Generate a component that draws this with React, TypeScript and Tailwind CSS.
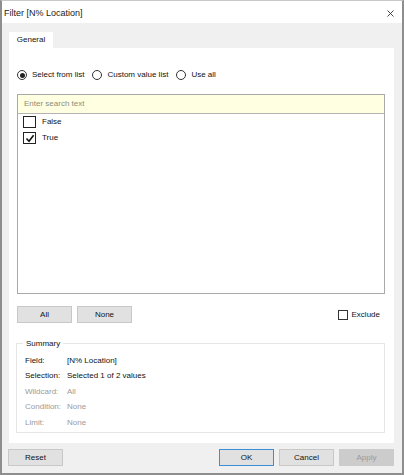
import React, { useState } from 'react';

const font = { fontFamily: '"Liberation Sans", Arial, sans-serif' };

function Radio({ checked }: { checked?: boolean }) {
  return (
    <span className="flex h-[10px] w-[10px] shrink-0 items-center justify-center rounded-full border border-[#333333] bg-white">
      {checked && <span className="h-[5px] w-[5px] rounded-full bg-[#222222]" />}
    </span>
  );
}

function Check({ checked, small }: { checked?: boolean; small?: boolean }) {
  return (
    <span
      className={
        small
          ? 'flex h-[10px] w-[10px] shrink-0 items-center justify-center border border-[#333333] bg-white'
          : 'flex h-[12px] w-[13px] shrink-0 items-center justify-center border border-[#222222] bg-white'
      }
    >
      {checked && (
        <svg width="10" height="9" viewBox="0 0 10 9">
          <path d="M1.5 4.5 L4 7.2 L8.6 1.2" fill="none" stroke="#111" strokeWidth="1.6" />
        </svg>
      )}
    </span>
  );
}

function Btn({ label, variant }: { label: string; variant?: 'primary' | 'disabled' }) {
  const base = 'flex h-[17px] items-center justify-center border text-[8px]';
  const cls =
    variant === 'primary'
      ? 'border-[#3c8fd6] bg-[#e1e1e1] text-[#111]'
      : variant === 'disabled'
      ? 'border-[#cccccc] bg-[#cccccc] text-[#9a9a9a]'
      : 'border-[#c8c8c8] bg-[#e1e1e1] text-[#111]';
  return <div className={`${base} ${cls} w-[55px]`}>{label}</div>;
}

export default function App() {
  const [values] = useState([
    { name: 'False', on: false },
    { name: 'True', on: true },
  ]);

  const summary = [
    { k: 'Field:', v: '[N% Location]', dim: false },
    { k: 'Selection:', v: 'Selected 1 of 2 values', dim: false },
    { k: 'Wildcard:', v: 'All', dim: true },
    { k: 'Condition:', v: 'None', dim: true },
    { k: 'Limit:', v: 'None', dim: true },
  ];

  return (
    <div
      style={font}
      className="flex h-[475px] w-[404px] flex-col border-x-2 border-b-2 border-t border-x-[#8e8e8e] border-b-[#8e8e8e] border-t-[#c8c8c8] bg-[#f0f0f0] text-[#111]"
    >
      {/* title bar */}
      <div className="flex h-[22px] items-center justify-between bg-white pl-[2px] pr-[8px] pt-[3px]">
        <span className="text-[9px] text-[#1a1a1a]">Filter [N% Location]</span>
        <svg width="7" height="7" viewBox="0 0 7 7">
          <path d="M0.5 0.5 L6.5 6.5 M6.5 0.5 L0.5 6.5" stroke="#333" strokeWidth="0.9" />
        </svg>
      </div>

      <div className="flex flex-col px-[7px] pt-[9px]">
        {/* tab */}
        <div className="flex h-[16px] w-[44px] items-center justify-center bg-white text-[8px]">General</div>

        {/* panel */}
        <div className="flex h-[395px] w-[385px] flex-col bg-white">
          <div className="flex items-center gap-[5px] pl-[8px] pt-[21px] text-[8px]">
            <Radio checked />
            <span className="mr-[3px]">Select from list</span>
            <Radio />
            <span className="mr-[3px]">Custom value list</span>
            <Radio />
            <span>Use all</span>
          </div>

          {/* list box */}
          <div className="ml-[8px] mt-[13px] flex h-[200px] w-[368px] flex-col border border-[#a9a9a9]">
            <div className="flex h-[19px] items-center border-b border-[#b4b4b4] bg-[#ffffe1] pl-[6px] text-[8px] text-[#8c8c7c]">
              Enter search text
            </div>
            {values.map((it) => (
              <div key={it.name} className="flex h-[16px] items-center gap-[6px] pl-[5px] text-[8px]">
                <Check checked={it.on} />
                <span>{it.name}</span>
              </div>
            ))}
          </div>

          {/* all / none / exclude */}
          <div className="ml-[8px] mt-[12px] flex w-[368px] items-center gap-[5px]">
            <Btn label="All" />
            <Btn label="None" />
            <div className="ml-auto flex items-center gap-[4px] pr-[5px] text-[8px]">
              <Check small />
              <span>Exclude</span>
            </div>
          </div>

          {/* summary */}
          <div className="relative ml-[7px] mt-[20px] flex h-[90px] w-[369px] flex-col border border-[#e6e6e6] pl-[8px] pt-[9px] text-[8px]">
            <span className="absolute -top-[6px] left-[6px] bg-white px-[3px] text-[8px]">Summary</span>
            {summary.map((r) => (
              <div key={r.k} className={`flex h-[15.5px] items-center ${r.dim ? 'text-[#9a9a9a]' : 'text-[#111]'}`}>
                <span className="w-[42px] shrink-0">{r.k}</span>
                <span>{r.v}</span>
              </div>
            ))}
          </div>
        </div>
      </div>

      {/* footer */}
      <div className="mt-[6px] flex items-center gap-[5px] pl-[6px] pr-[8px]">
        <Btn label="Reset" />
        <div className="ml-auto flex gap-[5px]">
          <Btn label="OK" variant="primary" />
          <Btn label="Cancel" />
          <Btn label="Apply" variant="disabled" />
        </div>
      </div>
    </div>
  );
}
